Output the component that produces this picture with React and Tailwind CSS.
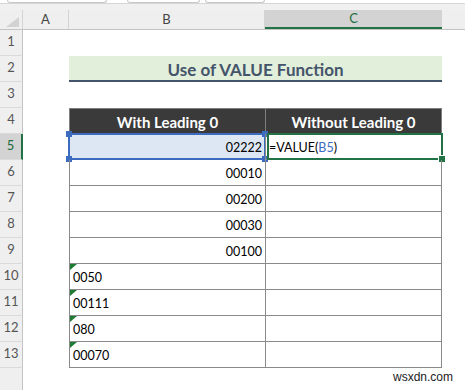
import React from "react";

const rows = [
  { n: 1 },
  { n: 2, kind: "title" },
  { n: 3 },
  { n: 4, kind: "head" },
  { n: 5, kind: "active", b: "02222" },
  { n: 6, b: "00010" },
  { n: 7, b: "00200" },
  { n: 8, b: "00030" },
  { n: 9, b: "00100" },
  { n: 10, b: "0050", text: true },
  { n: 11, b: "00111", text: true },
  { n: 12, b: "080", text: true },
  { n: 13, b: "00070", text: true },
];

function RowHead({ n, active }) {
  return (
    <div
      className={
        "w-[23px] shrink-0 flex items-end justify-center pb-[4px] text-[13px] border-b border-[#dadada] " +
        (active
          ? "bg-[#d3d3d3] text-[#1e6b40] border-r-2 border-r-[#217346]"
          : "bg-[#efefef] text-[#555] border-r border-r-[#c4c4c4]")
      }
    >
      {n}
    </div>
  );
}

function GreenFlag() {
  return (
    <svg className="absolute left-0 top-0" width="7" height="6" viewBox="0 0 7 6">
      <polygon points="0,0 7,0 0,6" fill="#1e7b34" />
    </svg>
  );
}

function SheetRow({ row }) {
  const { n, kind, b, text } = row;

  if (kind === "title") {
    return (
      <div className="flex h-[26px]">
        <RowHead n={n} />
        <div className="w-[46px] shrink-0" />
        <div className="w-[373px] shrink-0 bg-[#e2efda] border-b-2 border-[#44546a] flex items-center justify-center pt-[3px] text-[17px] font-bold text-[#44546a]">
          Use of VALUE Function
        </div>
        <div className="flex-1" />
      </div>
    );
  }

  if (kind === "head") {
    return (
      <div className="flex h-[26px]">
        <RowHead n={n} />
        <div className="w-[46px] shrink-0" />
        <div className="w-[196px] shrink-0 bg-[#3a3a3a] border-l border-t border-[#7f7f7f] flex items-center justify-center pt-[1px] text-[15px] font-bold text-white">
          With Leading 0
        </div>
        <div className="w-[177px] shrink-0 bg-[#3a3a3a] border-l border-r border-t border-[#7f7f7f] flex items-center justify-center pt-[1px] text-[15px] font-bold text-white">
          Without Leading 0
        </div>
        <div className="flex-1" />
      </div>
    );
  }

  if (!b) {
    return (
      <div className="flex h-[26px]">
        <RowHead n={n} />
        <div className="flex-1" />
      </div>
    );
  }

  const active = kind === "active";

  return (
    <div className="flex h-[26px]">
      <RowHead n={n} active={active} />
      <div className="w-[46px] shrink-0" />
      <div
        className={
          "relative w-[196px] shrink-0 border-l border-b border-[#8a8a8a] flex items-center pt-[3px] px-[3px] text-[12.5px] text-black " +
          (text ? "justify-start " : "justify-end ") +
          (active ? "bg-[#dde7f4]" : "")
        }
      >
        {text && <GreenFlag />}
        {b}
        {active && (
          <div className="absolute -left-[2px] -top-[1px] -right-[1px] -bottom-[1px] border-2 border-[#3b6cc0]">
            <span className="absolute -left-[4px] -top-[4px] w-[6px] h-[6px] bg-[#3b6cc0]" />
            <span className="absolute -right-[4px] -top-[4px] w-[6px] h-[6px] bg-[#3b6cc0]" />
            <span className="absolute -left-[4px] -bottom-[4px] w-[6px] h-[6px] bg-[#3b6cc0]" />
            <span className="absolute -right-[4px] -bottom-[4px] w-[6px] h-[6px] bg-[#3b6cc0]" />
          </div>
        )}
      </div>
      <div className="relative w-[177px] shrink-0 border-l border-r border-b border-[#8a8a8a] flex items-center pt-[3px] px-[3px] text-[12.5px] text-black">
        {active && (
          <>
            <span>
              =VALUE(<span className="text-[#3b6cc0]">B5</span>)
            </span>
            <div className="absolute left-[1px] -top-[1px] -right-[2px] -bottom-[1px] border-2 border-[#217346]">
              <span className="absolute -right-[4px] -bottom-[4px] w-[6px] h-[6px] bg-[#217346] outline outline-1 outline-white" />
            </div>
          </>
        )}
      </div>
      <div className="flex-1" />
    </div>
  );
}

export default function App() {
  return (
    <div
      className="relative w-[465px] h-[390px] overflow-hidden bg-white"
      style={{ fontFamily: "Lato, 'Open Sans', sans-serif" }}
    >
      {/* ribbon leftovers */}
      <div className="h-[10px] bg-[#f0f0f0] flex items-start">
        <div className="w-full h-[4px] bg-white border-b border-[#d6d6d6] flex gap-[5px] pl-[7px]">
          <div className="w-[100px] h-[3px] border-b border-l border-r border-[#c8c8c8] rounded-b-[3px]" />
          <div className="ml-[15px] w-[73px] h-[3px] border-b border-l border-r border-[#c8c8c8] rounded-b-[3px]" />
          <div className="w-[60px] h-[3px] border-b border-l border-r border-[#c8c8c8] rounded-b-[3px]" />
        </div>
      </div>

      {/* column headers */}
      <div className="flex h-[20px] bg-[#efefef] border-b border-[#c4c4c4] text-[13px] text-[#444]">
        <div className="relative w-[23px] shrink-0 border-r border-[#d4d4d4]">
          <svg className="absolute right-[3px] bottom-[2px]" width="13" height="10" viewBox="0 0 13 10">
            <polygon points="13,0 13,10 0,10" fill="#d2d2d2" />
          </svg>
        </div>
        <div className="w-[46px] shrink-0 flex items-center justify-center border-r border-[#d4d4d4]">A</div>
        <div className="w-[196px] shrink-0 flex items-center justify-center border-r border-[#d4d4d4]">B</div>
        <div className="w-[177px] shrink-0 flex items-center justify-center bg-[#d3d3d3] border-b-2 border-[#217346] text-[#1e6b40]">
          C
        </div>
        <div className="flex-1" />
      </div>

      {rows.map((r) => (
        <SheetRow key={r.n} row={r} />
      ))}

      <div className="flex h-[30px]">
        <div className="w-[23px] shrink-0 bg-[#efefef] border-r border-[#c4c4c4]" />
        <div className="flex-1" />
      </div>

      <div
        className="absolute right-[12px] bottom-[4px] text-[12px] text-[#222]"
        style={{ fontFamily: "'Liberation Sans', Arial, sans-serif" }}
      >
        wsxdn.com
      </div>
    </div>
  );
}
